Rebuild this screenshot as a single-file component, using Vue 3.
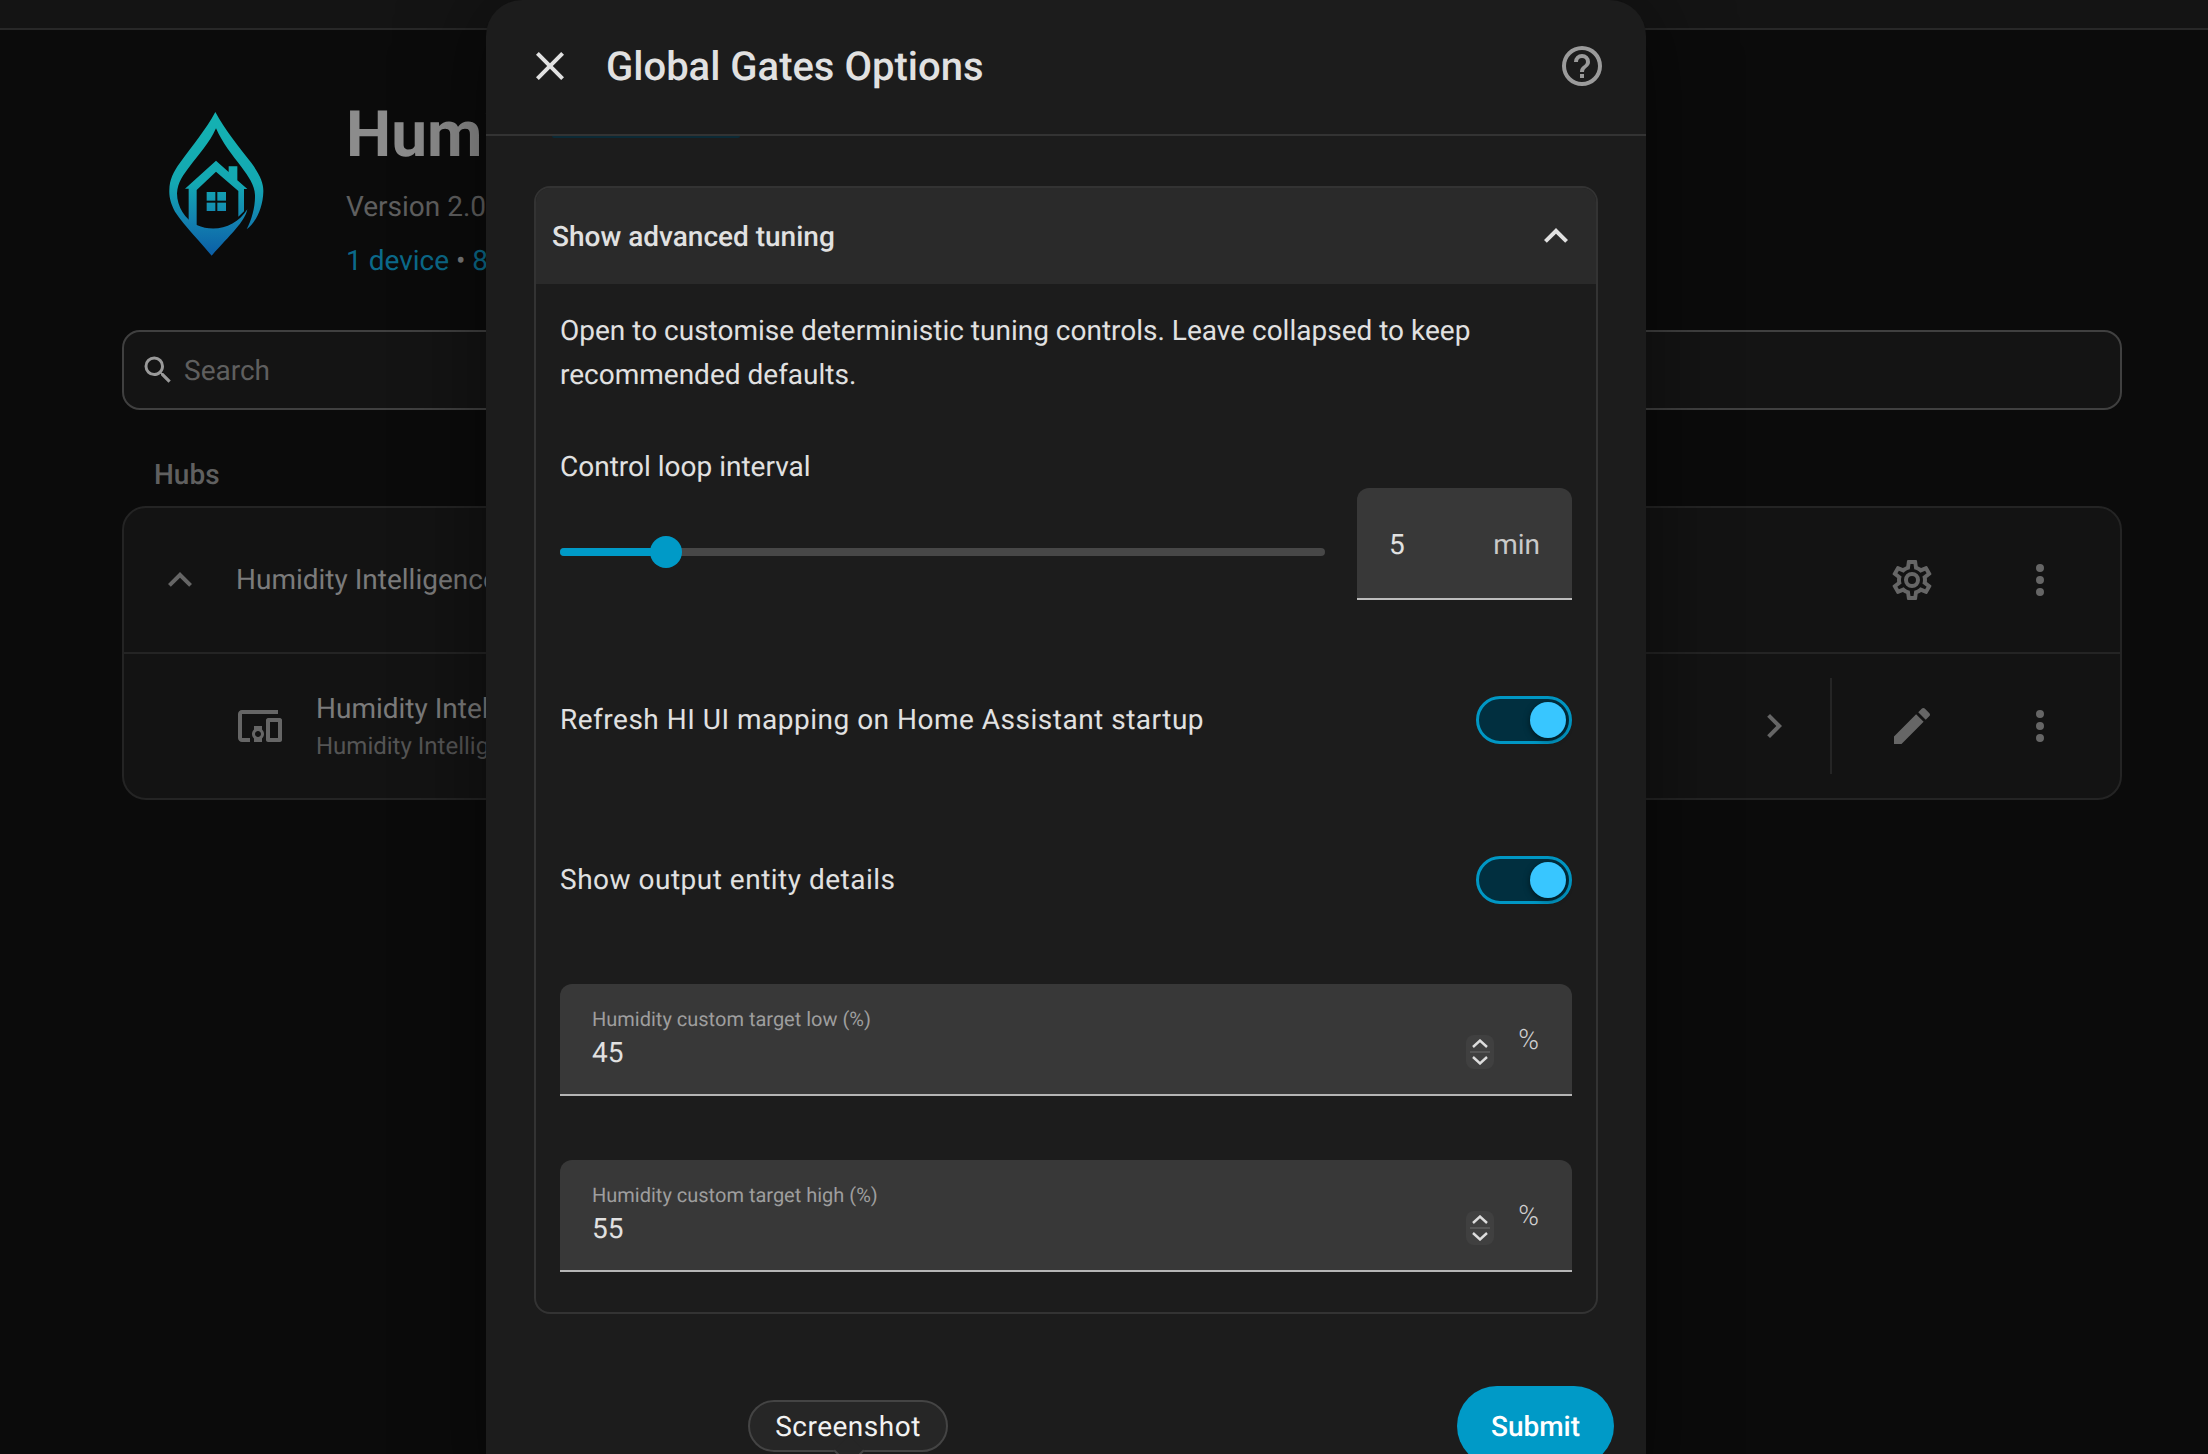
<template>
  <div class="page">
    <div class="topbar"></div>

    <div class="content">
      <section class="intro">
        <svg class="logo" viewBox="0 0 540 540">
          <defs>
            <linearGradient id="dropGrad" gradientUnits="userSpaceOnUse" x1="0" y1="66" x2="0" y2="497">
              <stop offset="0" stop-color="#14b2b2" />
              <stop offset="0.5" stop-color="#14a8b2" />
              <stop offset="0.75" stop-color="#1382b0" />
              <stop offset="1" stop-color="#0b5ea6" />
            </linearGradient>
          </defs>
          <g fill="url(#dropGrad)">
            <path d="M256 66C285 120 330 175 365 220C390 255 401 280 400 305C399 355 375 400 350 418C365 390 376 350 375 315C374 285 355 260 335 232C305 192 278 160 258 115C238 160 205 195 180 228C160 255 143 275 141 310C141 350 165 388 200 405C255 430 320 410 352 358C345 395 300 435 245 497C215 460 165 410 135 365C122 340 117 320 118 300C118 270 130 245 150 218C190 163 228 118 256 66Z" />
            <path d="M165 296L258 212L296 246V229H322V271L352 297H342V364L325 380V303L258 245L200 300V408L176 395V296Z" />
            <rect x="230" y="306" width="26" height="26" />
            <rect x="262" y="306" width="26" height="26" />
            <rect x="230" y="338" width="26" height="25" />
            <rect x="262" y="338" width="26" height="25" />
          </g>
        </svg>
        <div class="intro-text">
          <h1 class="intro-title">Humidity Intelligence</h1>
          <div class="intro-version">Version 2.0.0</div>
          <div class="intro-links">1 device <span class="dot">•</span> 8 entities</div>
        </div>
      </section>

      <div class="search">
        <svg class="search-icon" viewBox="0 0 24 24"><path :d="icons.magnify" /></svg>
        <span>Search</span>
      </div>

      <div class="section-title">Hubs</div>

      <div class="hub-card">
        <div class="hub-row">
          <svg class="icon chevron-left" viewBox="0 0 24 24"><path :d="icons.chevronUp" /></svg>
          <div class="hub-name">Humidity Intelligence</div>
          <svg class="icon" viewBox="0 0 24 24"><path :d="icons.cog" /></svg>
          <svg class="icon kebab" viewBox="0 0 24 24"><path :d="icons.dots" /></svg>
        </div>
        <div class="hub-row device-row">
          <svg class="icon device-icon" viewBox="0 0 24 24"><path :d="icons.devices" /></svg>
          <div class="hub-name">
            <div>Humidity Intelligence</div>
            <div class="hub-sub">Humidity Intelligence</div>
          </div>
          <svg class="icon" viewBox="0 0 24 24"><path :d="icons.chevronRight" /></svg>
          <div class="row-divider"></div>
          <svg class="icon" viewBox="0 0 24 24"><path :d="icons.pencil" /></svg>
          <svg class="icon kebab" viewBox="0 0 24 24"><path :d="icons.dots" /></svg>
        </div>
      </div>
    </div>

    <div class="dialog">
      <header class="dialog-header">
        <svg class="icon close-icon" viewBox="0 0 24 24"><path :d="icons.close" /></svg>
        <h2 class="dialog-title">Global Gates Options</h2>
        <svg class="icon help-icon" viewBox="0 0 24 24"><path :d="icons.help" /></svg>
      </header>

      <div class="dialog-body">
        <div class="tuning-card">
          <div class="tuning-summary">
            <span class="summary-text">Show advanced tuning</span>
            <svg class="icon summary-chevron" viewBox="0 0 24 24"><path :d="icons.chevronUp" /></svg>
          </div>

          <div class="tuning-content">
            <p class="description">
              Open to customise deterministic tuning controls. Leave collapsed to keep recommended defaults.
            </p>

            <div class="slider-label">Control loop interval</div>
            <div class="slider-row">
              <div class="slider">
                <div class="slider-fill" :style="{ width: sliderPercent + '%' }"></div>
                <div class="slider-knob" :style="{ left: sliderPercent + '%' }"></div>
              </div>
              <div class="slider-input">
                <span>{{ interval }}</span>
                <span class="slider-unit">min</span>
              </div>
            </div>

            <div
              v-for="item in toggles"
              :key="item"
              class="toggle-row"
            >
              <span>{{ item }}</span>
              <div class="toggle"><div class="toggle-knob"></div></div>
            </div>

            <div
              v-for="field in fields"
              :key="field.label"
              class="number-field"
            >
              <div class="number-main">
                <div class="number-label">{{ field.label }}</div>
                <div class="number-value">{{ field.value }}</div>
              </div>
              <div class="spinner">
                <svg viewBox="0 0 16 9"><path d="M1 8L8 1.5L15 8" /></svg>
                <div class="spinner-line"></div>
                <svg viewBox="0 0 16 9"><path d="M1 1L8 7.5L15 1" /></svg>
              </div>
              <div class="number-unit">%</div>
            </div>
          </div>
        </div>
      </div>

      <footer class="dialog-footer">
        <div class="screenshot-tip">Screenshot</div>
        <button class="submit-button">Submit</button>
      </footer>
    </div>
  </div>
</template>

<script setup>
const interval = 5;
const sliderPercent = ((interval - 1) / 29) * 100;

const toggles = [
  'Refresh HI UI mapping on Home Assistant startup',
  'Show output entity details'
];

const fields = [
  { label: 'Humidity custom target low (%)', value: 45 },
  { label: 'Humidity custom target high (%)', value: 55 }
];

const icons = {
  magnify: 'M9.5,3A6.5,6.5 0 0,1 16,9.5C16,11.11 15.41,12.59 14.44,13.73L14.71,14H15.5L20.5,19L19,20.5L14,15.5V14.71L13.73,14.44C12.59,15.41 11.11,16 9.5,16A6.5,6.5 0 0,1 3,9.5A6.5,6.5 0 0,1 9.5,3M9.5,5C7,5 5,7 5,9.5C5,12 7,14 9.5,14C12,14 14,12 14,9.5C14,7 12,5 9.5,5Z',
  chevronUp: 'M7.41,15.41L12,10.83L16.59,15.41L18,14L12,8L6,14L7.41,15.41Z',
  chevronRight: 'M8.59,16.58L13.17,12L8.59,7.41L10,6L16,12L10,18L8.59,16.58Z',
  close: 'M19,6.41L17.59,5L12,10.59L6.41,5L5,6.41L10.59,12L5,17.59L6.41,19L12,13.41L17.59,19L19,17.59L13.41,12L19,6.41Z',
  help: 'M11,18H13V16H11V18M12,2A10,10 0 0,0 2,12A10,10 0 0,0 12,22A10,10 0 0,0 22,12A10,10 0 0,0 12,2M12,20C7.59,20 4,16.41 4,12C4,7.59 7.59,4 12,4C16.41,4 20,7.59 20,12C20,16.41 16.41,20 12,20M12,6A4,4 0 0,0 8,10H10A2,2 0 0,1 12,8A2,2 0 0,1 14,10C14,12 11,11.75 11,15H13C13,12.75 16,12.5 16,10A4,4 0 0,0 12,6Z',
  dots: 'M12,16A2,2 0 0,1 14,18A2,2 0 0,1 12,20A2,2 0 0,1 10,18A2,2 0 0,1 12,16M12,10A2,2 0 0,1 14,12A2,2 0 0,1 12,14A2,2 0 0,1 10,12A2,2 0 0,1 12,10M12,4A2,2 0 0,1 14,6A2,2 0 0,1 12,8A2,2 0 0,1 10,6A2,2 0 0,1 12,4Z',
  pencil: 'M20.71,7.04C21.1,6.65 21.1,6 20.71,5.63L18.37,3.29C18,2.9 17.35,2.9 16.96,3.29L15.12,5.12L18.87,8.87M3,17.25V21H6.75L17.81,9.93L14.06,6.18L3,17.25Z',
  devices: 'M3 6H21V4H3C1.9 4 1 4.9 1 6V18C1 19.1 1.9 20 3 20H7V18H3V6M13 12H9V13.78C8.39 14.33 8 15.11 8 16C8 16.89 8.39 17.67 9 18.22V20H13V18.22C13.61 17.67 14 16.88 14 16S13.61 14.33 13 13.78V12M11 17.5C10.17 17.5 9.5 16.83 9.5 16S10.17 14.5 11 14.5 12.5 15.17 12.5 16 11.83 17.5 11 17.5M22 8H16C15.5 8 15 8.5 15 9V19C15 19.5 15.5 20 16 20H22C22.5 20 23 19.5 23 19V9C23 8.5 22.5 8 22 8M21 18H17V10H21V18Z',
  cog: 'M12,8A4,4 0 0,1 16,12A4,4 0 0,1 12,16A4,4 0 0,1 8,12A4,4 0 0,1 12,8M12,10A2,2 0 0,0 10,12A2,2 0 0,0 12,14A2,2 0 0,0 14,12A2,2 0 0,0 12,10M10,22C9.75,22 9.54,21.82 9.5,21.58L9.13,18.93C8.5,18.68 7.96,18.34 7.44,17.94L4.95,18.95C4.73,19.03 4.46,18.95 4.34,18.73L2.34,15.27C2.21,15.05 2.27,14.78 2.46,14.63L4.57,12.97L4.5,12L4.57,11L2.46,9.37C2.27,9.22 2.21,8.95 2.34,8.73L4.34,5.27C4.46,5.05 4.73,4.96 4.95,5.05L7.44,6.05C7.96,5.66 8.5,5.32 9.13,5.07L9.5,2.42C9.54,2.18 9.75,2 10,2H14C14.25,2 14.46,2.18 14.5,2.42L14.87,5.07C15.5,5.32 16.04,5.66 16.56,6.05L19.05,5.05C19.27,4.96 19.54,5.05 19.66,5.27L21.66,8.73C21.79,8.95 21.73,9.22 21.54,9.37L19.43,11L19.5,12L19.43,13L21.54,14.63C21.73,14.78 21.79,15.05 21.66,15.27L19.66,18.73C19.54,18.95 19.27,19.04 19.05,18.95L16.56,17.95C16.04,18.34 15.5,18.68 14.87,18.93L14.5,21.58C14.46,21.82 14.25,22 14,22H10M11.25,4L10.88,6.61C9.68,6.86 8.62,7.5 7.85,8.39L5.44,7.35L4.69,8.65L6.8,10.2C6.4,11.37 6.4,12.64 6.8,13.8L4.68,15.36L5.43,16.66L7.86,15.62C8.63,16.5 9.68,17.14 10.87,17.38L11.24,20H12.76L13.13,17.39C14.32,17.14 15.37,16.5 16.14,15.62L18.57,16.66L19.32,15.36L17.2,13.81C17.6,12.64 17.6,11.37 17.2,10.2L19.31,8.65L18.56,7.35L16.15,8.39C15.38,7.5 14.32,6.86 13.12,6.62L12.75,4H11.25Z'
};
</script>

<style scoped>
.page {
  position: relative;
  height: 1454px;
  overflow: hidden;
  background: #0b0b0b;
  font-family: Roboto, "Liberation Sans", sans-serif;
  font-size: 28px;
  line-height: 40px;
  text-rendering: geometricPrecision;
}

.topbar {
  height: 28px;
  background: #141414;
  border-bottom: 2px solid #282828;
}

.content {
  width: 2000px;
  margin-left: 122px;
}

.icon {
  width: 48px;
  height: 48px;
  flex-shrink: 0;
  fill: #666666;
}

.intro {
  display: flex;
  height: 190px;
  padding-top: 60px;
}

.logo {
  width: 180px;
  height: 180px;
  margin-left: 8px;
  flex-shrink: 0;
}

.intro-text {
  margin-left: 36px;
  padding-top: 7px;
}

.intro-title {
  margin: 0;
  font-size: 64px;
  line-height: 76px;
  font-weight: 700;
  color: #8c8c8c;
  white-space: nowrap;
}

.intro-version {
  margin-top: 14px;
  color: #5f5f5f;
}

.intro-links {
  margin-top: 14px;
  color: #0b6a8a;
}

.dot {
  color: #7a7a7a;
}

.search {
  display: flex;
  align-items: center;
  height: 80px;
  margin-top: 50px;
  padding-left: 16px;
  box-sizing: border-box;
  background: #141414;
  border: 2px solid #404040;
  border-radius: 18px;
  color: #5f5f5f;
}

.search span {
  padding-top: 2px;
}

.search-icon {
  width: 36px;
  height: 36px;
  margin-right: 8px;
  fill: #9a9a9a;
}

.section-title {
  margin: 45px 0 11px 32px;
  font-weight: 500;
  color: #606060;
}

.hub-card {
  background: #131313;
  border: 2px solid #242424;
  border-radius: 24px;
  box-sizing: border-box;
  height: 294px;
}

.hub-row {
  display: flex;
  align-items: center;
  height: 144px;
  padding: 0 56px 0 32px;
}

.device-row {
  height: 146px;
  padding-left: 112px;
  border-top: 2px solid #242424;
  box-sizing: border-box;
}

.hub-name {
  flex: 1;
  margin-left: 32px;
  color: #7b7b7b;
  white-space: nowrap;
}

.hub-sub {
  font-size: 24px;
  line-height: 34px;
  color: #555555;
}

.kebab {
  margin-left: 80px;
}

.row-divider {
  width: 2px;
  height: 96px;
  margin: 0 56px 0 32px;
  background: #252525;
}

/* modal */
.dialog {
  position: absolute;
  left: 486px;
  top: 0;
  width: 1160px;
  height: 1520px;
  box-sizing: border-box;
  background: #1c1c1c;
  border-radius: 36px;
  box-shadow: 0 0 90px rgba(0, 0, 0, 0.45);
}

.dialog-header {
  position: relative;
  display: flex;
  align-items: center;
  height: 136px;
  padding: 0 40px 2px;
  box-sizing: border-box;
  border-bottom: 2px solid #333333;
}

.dialog-header::after {
  content: '';
  position: absolute;
  left: 66px;
  bottom: -4px;
  width: 188px;
  height: 2px;
  border-radius: 0 0 4px 4px;
  background: #0b2a36;
}

.close-icon {
  fill: #e1e1e1;
}

.dialog-title {
  flex: 1;
  margin: 0 0 0 32px;
  padding-top: 2px;
  font-size: 40px;
  line-height: 48px;
  font-weight: 500;
  color: #e1e1e1;
}

.help-icon {
  fill: #9b9b9b;
}

.dialog-body {
  padding: 50px 48px 0;
}

.tuning-card {
  height: 1128px;
  box-sizing: border-box;
  border: 2px solid #333333;
  border-radius: 16px;
  overflow: hidden;
}

.tuning-summary {
  display: flex;
  align-items: center;
  justify-content: space-between;
  height: 96px;
  padding: 0 16px;
  background: #2a2a2a;
  font-weight: 500;
  color: #e1e1e1;
}

.summary-text {
  padding-top: 2px;
}

.summary-chevron {
  fill: #e1e1e1;
}

.tuning-content {
  padding: 25px 24px 40px;
  color: #e1e1e1;
}

.description {
  margin: 0;
  line-height: 44px;
}

.slider-label {
  margin-top: 50px;
}

.slider-row {
  display: flex;
  align-items: flex-start;
  gap: 32px;
  margin-top: 1px;
}

.slider {
  position: relative;
  flex: 1;
  height: 8px;
  margin-top: 60px;
  border-radius: 4px;
  background: #474747;
}

.slider-fill {
  height: 100%;
  border-radius: 4px;
  background: #009ac7;
}

.slider-knob {
  position: absolute;
  top: -12px;
  width: 32px;
  height: 32px;
  margin-left: -16px;
  border-radius: 50%;
  background: #009ac7;
}

.slider-input {
  display: flex;
  align-items: center;
  justify-content: space-between;
  width: 215px;
  height: 112px;
  padding: 4px 32px 0 32px;
  box-sizing: border-box;
  background: #383838;
  border-bottom: 2px solid #bdbdbd;
  border-radius: 12px 12px 0 0;
}

.slider-unit {
  color: #c9c9c9;
}

.toggle-row {
  display: flex;
  align-items: center;
  justify-content: space-between;
  height: 48px;
  margin-top: 96px;
  letter-spacing: 0.5px;
}

.toggle-row + .toggle-row {
  margin-top: 112px;
}

.toggle {
  display: flex;
  justify-content: flex-end;
  align-items: center;
  width: 96px;
  height: 48px;
  padding-right: 3px;
  box-sizing: border-box;
  border: 3px solid #0097c4;
  border-radius: 24px;
  background: #012f3f;
}

.toggle-knob {
  width: 36px;
  height: 36px;
  border-radius: 50%;
  background: #38c6ff;
  box-shadow: 0 2px 6px rgba(0, 0, 0, 0.5);
}

.number-field {
  display: flex;
  align-items: flex-start;
  height: 112px;
  margin-top: 64px;
  padding: 21px 33px 0 32px;
  box-sizing: border-box;
  background: #383838;
  border-bottom: 2px solid #b5b5b5;
  border-radius: 12px 12px 0 0;
}

.toggle-row + .number-field {
  margin-top: 80px;
}

.number-main {
  flex: 1;
}

.number-label {
  font-size: 20px;
  line-height: 28px;
  color: #9e9e9e;
}

.number-value {
  line-height: 40px;
}

.spinner {
  display: flex;
  flex-direction: column;
  align-items: center;
  gap: 3px;
  width: 28px;
  height: 34px;
  margin-top: 30px;
  padding-top: 4px;
  box-sizing: border-box;
  border-radius: 8px;
  background: #404040;
}

.spinner svg {
  width: 16px;
  height: 9px;
  fill: none;
  stroke: #dddddd;
  stroke-width: 2.4;
}

.spinner-line {
  width: 20px;
  height: 2px;
  background: #565656;
}

.number-unit {
  margin: 20px 0 0 24px;
  font-size: 28px;
  line-height: 30px;
  font-weight: 300;
  color: #d0d0d0;
}

.dialog-footer {
  position: relative;
  display: flex;
  justify-content: flex-end;
  padding: 72px 32px 0 0;
}

.submit-button {
  width: 157px;
  height: 80px;
  border: none;
  border-radius: 40px;
  background: #009ac7;
  color: #ffffff;
  font-family: inherit;
  font-size: 28px;
  font-weight: 500;
  text-rendering: geometricPrecision;
}

.screenshot-tip {
  position: absolute;
  left: 262px;
  top: 86px;
  width: 200px;
  height: 52px;
  box-sizing: border-box;
  border: 2px solid #444444;
  border-radius: 26px;
  background: #262626;
  color: #f2f2f2;
  text-align: center;
  letter-spacing: 0.5px;
  line-height: 50px;
}

.screenshot-tip::after {
  content: '';
  position: absolute;
  left: 88px;
  bottom: -12px;
  width: 20px;
  height: 20px;
  transform: rotate(45deg);
  background: #262626;
  border-right: 2px solid #444444;
  border-bottom: 2px solid #444444;
}
</style>

<style>
html, body {
  margin: 0;
  overflow: hidden;
  background: #0b0b0b;
}
</style>
